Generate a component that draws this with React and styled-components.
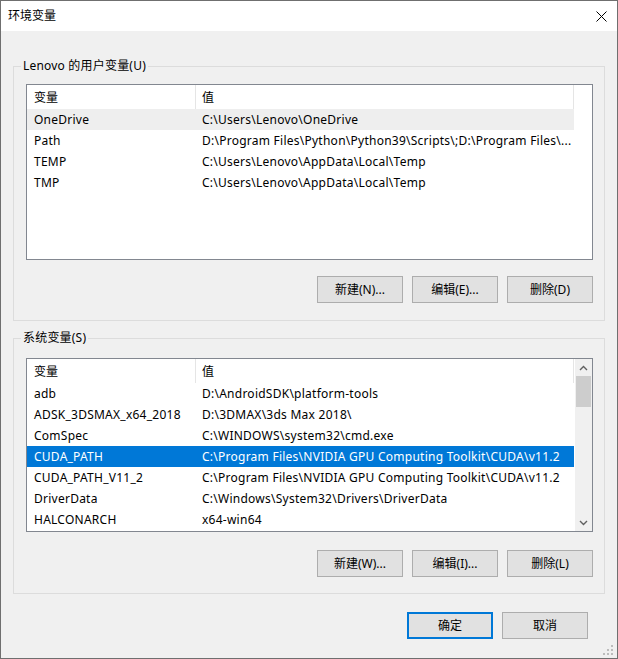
import React from 'react';
import styled, { createGlobalStyle } from 'styled-components';

const GlobalStyle = createGlobalStyle`
  * { box-sizing: border-box; }
  html, body {
    margin: 0;
    padding: 0;
    background: #f0f0f0;
  }
  body {
    font-family: "Noto Sans", "Noto Sans CJK SC", sans-serif;
    font-size: 12px;
    color: #000;
  }
`;

const Window = styled.div`
  position: relative;
  width: 618px;
  height: 659px;
  border: 1px solid #6f6f6f;
  background: #f0f0f0;
  display: flex;
  flex-direction: column;
`;

const TitleBar = styled.div`
  height: 30px;
  background: #fff;
  display: flex;
  align-items: center;
  justify-content: space-between;
  padding-left: 7px;
  flex-shrink: 0;
`;

const Title = styled.span`
  line-height: 16px;
`;

const CloseButton = styled.div`
  width: 31px;
  height: 30px;
  display: flex;
  align-items: center;
  justify-content: center;
`;

const Body = styled.div`
  display: flex;
  flex-direction: column;
  padding: 27px 12px 0 12px;
`;

const Group = styled.fieldset`
  margin: ${(p) => p.$top || 0}px 0 0 0;
  padding: 0 11px ${(p) => p.$bottom}px 12px;
  border: 1px solid #dcdcdc;
  min-width: 0;
`;

const Legend = styled.legend`
  margin-left: -5px;
  padding: 0 2px;
  line-height: 16px;
  letter-spacing: 0.2px;
`;

const ListBox = styled.div`
  margin-top: ${(p) => p.$gap}px;
  height: ${(p) => p.$height}px;
  border: 1px solid #828790;
  background: #fff;
  display: flex;
  overflow: hidden;
`;

const Table = styled.div`
  width: 547px;
  display: flex;
  flex-direction: column;
`;

const HeaderRow = styled.div`
  display: grid;
  grid-template-columns: 169px 378px;
  height: 24px;
`;

const HeaderCell = styled.div`
  border-right: 1px solid #e5e5e5;
  padding: 1px 0 0 ${(p) => p.$pad}px;
  line-height: 23px;
`;

const Row = styled.div`
  display: grid;
  grid-template-columns: 169px 378px;
  height: 21px;
  overflow: hidden;
  background: ${(p) =>
    p.$state === 'active' ? '#0078d7' : p.$state === 'inactive' ? '#eeeeee' : 'transparent'};
  color: ${(p) => (p.$state === 'active' ? '#fff' : '#000')};
`;

const Cell = styled.div`
  padding: 1px 9px 0 ${(p) => p.$pad}px;
  line-height: 20px;
  letter-spacing: 0.25px;
  white-space: nowrap;
  overflow: hidden;
`;

const ScrollBar = styled.div`
  width: 17px;
  margin-left: auto;
  background: #f0f0f0;
  display: flex;
  flex-direction: column;
`;

const ScrollArrow = styled.div`
  height: 17px;
  display: flex;
  align-items: center;
  justify-content: center;
`;

const Thumb = styled.div`
  height: 31px;
  margin: 0 1px;
  background: #cdcdcd;
`;

const Track = styled.div`
  flex: 1;
`;

const ButtonRow = styled.div`
  display: flex;
  justify-content: flex-end;
  gap: 9px;
  margin-top: ${(p) => p.$gap}px;
  padding-right: ${(p) => p.$right || 0}px;
`;

const Button = styled.button`
  width: 86px;
  height: 27px;
  padding: 0;
  font: inherit;
  color: #000;
  background: #e1e1e1;
  border: ${(p) => (p.$default ? '2px solid #0078d7' : '1px solid #adadad')};
  line-height: 16px;
`;

const Grip = styled.svg`
  position: absolute;
  right: 3px;
  bottom: 2px;
`;

const userVars = [
  ['OneDrive', 'C:\\Users\\Lenovo\\OneDrive', 'inactive'],
  ['Path', 'D:\\Program Files\\Python\\Python39\\Scripts\\;D:\\Program Files\\...'],
  ['TEMP', 'C:\\Users\\Lenovo\\AppData\\Local\\Temp'],
  ['TMP', 'C:\\Users\\Lenovo\\AppData\\Local\\Temp'],
];

const systemVars = [
  ['adb', 'D:\\AndroidSDK\\platform-tools'],
  ['ADSK_3DSMAX_x64_2018', 'D:\\3DMAX\\3ds Max 2018\\'],
  ['ComSpec', 'C:\\WINDOWS\\system32\\cmd.exe'],
  ['CUDA_PATH', 'C:\\Program Files\\NVIDIA GPU Computing Toolkit\\CUDA\\v11.2', 'active'],
  ['CUDA_PATH_V11_2', 'C:\\Program Files\\NVIDIA GPU Computing Toolkit\\CUDA\\v11.2'],
  ['DriverData', 'C:\\Windows\\System32\\Drivers\\DriverData'],
  ['HALCONARCH', 'x64-win64'],
];

const Chevron = ({ up }) => (
  <svg width="9" height="6" viewBox="0 0 9 6">
    <path
      d={up ? 'M1 5 L4.5 1.5 L8 5' : 'M1 1 L4.5 4.5 L8 1'}
      fill="none"
      stroke="#606060"
      strokeWidth="1.4"
    />
  </svg>
);

const VarList = ({ rows, gap, height, scroll }) => (
  <ListBox $gap={gap} $height={height}>
    <Table>
      <HeaderRow>
        <HeaderCell $pad={7}>变量</HeaderCell>
        <HeaderCell $pad={6}>值</HeaderCell>
      </HeaderRow>
      {rows.map(([name, value, state]) => (
        <Row key={name} $state={state}>
          <Cell $pad={7}>{name}</Cell>
          <Cell $pad={6}>{value}</Cell>
        </Row>
      ))}
    </Table>
    {scroll && (
      <ScrollBar>
        <ScrollArrow>
          <Chevron up />
        </ScrollArrow>
        <Thumb />
        <Track />
        <ScrollArrow>
          <Chevron />
        </ScrollArrow>
      </ScrollBar>
    )}
  </ListBox>
);

const App = () => (
  <>
    <GlobalStyle />
    <Window>
      <TitleBar>
        <Title>环境变量</Title>
        <CloseButton>
          <svg width="11" height="11" viewBox="0 0 11 11">
            <path d="M0.5 0.5 L10.5 10.5 M10.5 0.5 L0.5 10.5" stroke="#000" strokeWidth="1" />
          </svg>
        </CloseButton>
      </TitleBar>
      <Body>
        <Group $bottom={17}>
          <Legend>Lenovo 的用户变量(U)</Legend>
          <VarList rows={userVars} gap={10} height={176} />
          <ButtonRow $gap={16}>
            <Button>新建(N)...</Button>
            <Button>编辑(E)...</Button>
            <Button>删除(D)</Button>
          </ButtonRow>
        </Group>
        <Group $top={9} $bottom={16}>
          <Legend>系统变量(S)</Legend>
          <VarList rows={systemVars} gap={12} height={174} scroll />
          <ButtonRow $gap={18}>
            <Button>新建(W)...</Button>
            <Button>编辑(I)...</Button>
            <Button>删除(L)</Button>
          </ButtonRow>
        </Group>
        <ButtonRow $gap={18} $right={17}>
          <Button $default>确定</Button>
          <Button>取消</Button>
        </ButtonRow>
      </Body>
      <Grip width="11" height="11" viewBox="0 0 11 11">
        <rect x="8" y="0" width="2" height="2" fill="#bcbcbc" />
        <rect x="4" y="4" width="2" height="2" fill="#bcbcbc" />
        <rect x="8" y="4" width="2" height="2" fill="#bcbcbc" />
        <rect x="0" y="8" width="2" height="2" fill="#bcbcbc" />
        <rect x="4" y="8" width="2" height="2" fill="#bcbcbc" />
        <rect x="8" y="8" width="2" height="2" fill="#bcbcbc" />
      </Grip>
    </Window>
  </>
);

export default App;
